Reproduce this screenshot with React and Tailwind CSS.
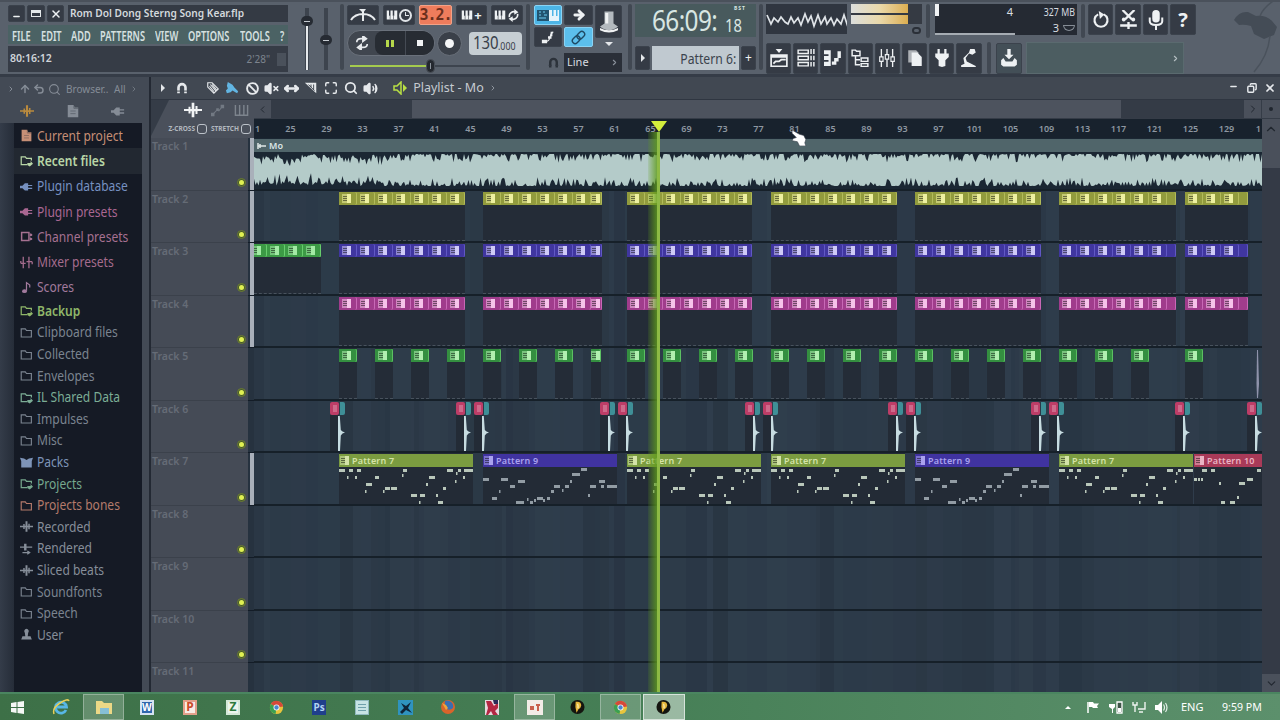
import {
  ArrowRight,
  ArrowUp,
  Ban,
  ChevronDown,
  ChevronLeft,
  ChevronRight,
  ChevronUp,
  Copy,
  Maximize,
  Minus,
  MoveHorizontal,
  Search,
  Undo2,
  Volume2,
  VolumeX,
  X,
} from "lucide-react";

const LANE_X = 254;
const LANE_W = 1008;

/* ---------- icons ---------- */

const glyphs = {
  doc: (
    <>
      <path d="M2 1h7l1 3h4v11H2z" fill="currentColor" />
      <path d="M9 1v4h5M5 8h6M5 11h6" fill="none" stroke="#2a303a" strokeWidth=".7" opacity=".6" />
    </>
  ),
  folder: <path d="M1.500 3.500h5l1.500 2h6v8h-12.500z" fill="none" stroke="currentColor" strokeWidth="1.400" />,
  folderLink: (
    <>
      <path d="M9 13H1.500V3.500h5l1.500 2h6v2.500" fill="none" stroke="currentColor" strokeWidth="1.500" />
      <path d="M9 11h4V8.500l3 3.500-4 3.500-3-2z" fill="currentColor" />
    </>
  ),
  plug: <path d="M0 7h3l3-3h4v2h5v1.500h-5v2h5V11h-5v2H6l-3-3H0z" fill="currentColor" />,
  channel: (
    <>
      <path d="M2 3h9v10H2z" fill="none" stroke="currentColor" strokeWidth="1.800" />
      <path d="M12 4l3 1v2l-3 1zM12 9l3 1v2l-3 1z" fill="currentColor" />
    </>
  ),
  mixer: (
    <path d="M4 1v14M11 1v14M1 9h6M8 7h7M1 6v3M15 7v3" fill="none" stroke="currentColor" strokeWidth="1.600" />
  ),
  note: (
    <>
      <path d="M8 12V2l4 3v3" fill="none" stroke="currentColor" strokeWidth="1.500" />
      <ellipse cx="5.500" cy="12.500" rx="3" ry="2.300" fill="currentColor" />
    </>
  ),
  packs: <path d="M0 2l5 1 3 2 3-2 5-1-1.500 4v8h-13V6z" fill="currentColor" />,
  wave: (
    <path d="M0 7.200h4V5h1.800v2h1V1.500h2.400V7h1V4.500H12v2.700h4v1.600h-4v2.700h-1.800V9h-1v5.500H6.800V9h-1v2H4V8.800H0z" fill="currentColor" />
  ),
  rendered: (
    <>
      <path d="M0 5.500h5V2h3v3.500h7V7H8v3.500H5V7H0z" fill="currentColor" />
      <path d="M3 13h9M9 11l3 2-3 2" fill="none" stroke="currentColor" strokeWidth="1.400" />
    </>
  ),
  user: <path d="M8 1a3 3 0 0 1 2 5l-.5 4h3.500l1.500 4h-13L3 10h3.500L6 6a3 3 0 0 1 2-5z" fill="currentColor" />,
  magnet: (
    <>
      <path d="M4 14V7.500a4 4 0 0 1 8 0V14" fill="none" stroke="currentColor" strokeWidth="3" />
      <path d="M2 11.500h4M10 11.500h4" stroke="#343a44" strokeWidth="1" />
    </>
  ),
  pencil: (
    <path d="M2 2h5l7 7-5 5-7-7zM5 4l6 7M7 4l5 6M4 6l5 6" fill="none" stroke="currentColor" strokeWidth="1.300" />
  ),
  brush: <path d="M3 1l5 3 2 3 4 4-1 2-2-1-3-2-2 2-4 1-1-3 2-2-1-3z" fill="currentColor" />,
  slice: (
    <>
      <path d="M1 2h13v12z" fill="currentColor" />
      <path d="M5 4l7 7M8 4v3M11 4v6" stroke="#343a44" strokeWidth="1" />
    </>
  ),
  piano: (
    <>
      <path d="M1 2h3v7h2V2h3v7h2V2h4v12H1z" fill="currentColor" />
      <path d="M5.500 9v5M10 9v5" stroke="#343a44" strokeWidth=".8" />
    </>
  ),
  keys: <path d="M1.500 2v11h13V2M6 2v11M10.500 2v11" fill="none" stroke="currentColor" strokeWidth="1.500" />,
  automation: (
    <>
      <path d="M2 13l5-5 2 1 4-5" fill="none" stroke="currentColor" strokeWidth="1.200" />
      <path d="M0 11h4v4H0zM6 6h3v3H6zM11 2h4v4h-4z" fill="currentColor" />
    </>
  ),
  playlist: (
    <>
      <path d="M5 0h6L8 3.500z" fill="currentColor" />
      <path d="M1 5.500h14v10H1z" fill="none" stroke="currentColor" strokeWidth="1.500" />
      <path d="M1 7h14M3 13l2-2h3l2-1.500h4" stroke="currentColor" strokeWidth="1.600" fill="none" />
    </>
  ),
  rack: (
    <path
      d="M1 1h9v3H1zM1 6.500h9v3H1zM1 12h9v3H1zM12.500 0v4.500M12.500 6v4M12.500 11.500v4M15 0v4.500M15 6v4M15 11.500v4"
      fill="none"
      stroke="currentColor"
      strokeWidth="1.300"
    />
  ),
  pianoRoll: (
    <>
      <path d="M0 1h6v14H0zM7 11h4v3H7zM9 8h4v3H9zM12 2h3v6h-3z" fill="currentColor" />
      <path d="M0 5.500h4M0 10.500h4" stroke="#343a44" strokeWidth="1.600" />
    </>
  ),
  tree: (
    <path
      d="M1 1h3l1 1h3v4H1zM4 6v8h4M4 9.500h4M9 8h6v3H9zM9 13h6v2.500H9z"
      fill="none"
      stroke="currentColor"
      strokeWidth="1.300"
    />
  ),
  faders: (
    <>
      <path d="M3 0v16M8 0v16M13 0v16" stroke="currentColor" strokeWidth="1.200" />
      <path d="M1.500 7h3v4h-3zM6.500 5h3v4h-3zM11.500 7h3v4h-3z" fill="#343a44" stroke="currentColor" />
    </>
  ),
  files: (
    <>
      <path d="M2 1h7l2 2v9H2z" fill="currentColor" opacity=".65" />
      <path d="M5 3h5l4 4v8H5z" fill="currentColor" />
    </>
  ),
  plugDown: <path d="M4 0h2v4h4V0h2v4h2v3l-3 3v5l-3 1-3-1v-5L2 7V4h2z" fill="currentColor" />,
  lamp: <path d="M9 0h4l1 3-3 2-3-1-3 4 1 3 8 4v1H1v-1.500L4 13l-1-5 5-5z" fill="currentColor" />,
  save: (
    <>
      <path d="M6.500 0h3v5H12L8 9 4 5h2.500z" fill="currentColor" />
      <path d="M1 10l2-2 2 3h6l2-3 2 2v4l-2 1.500H3L1 14z" fill="currentColor" />
    </>
  ),
  restart: (
    <>
      <path d="M10.500 3a5.800 5.800 0 1 1-5 0" fill="none" stroke="currentColor" strokeWidth="1.900" />
      <path d="M6 0l5 3-4 4z" fill="currentColor" />
    </>
  ),
  cut: (
    <>
      <path d="M3 0l8 8M13 0L5 8M1 13h14M8 10v6" stroke="currentColor" strokeWidth="2" />
      <circle cx="4" cy="8" r="1.600" fill="currentColor" />
      <circle cx="12" cy="8" r="1.600" fill="currentColor" />
    </>
  ),
  mic: (
    <>
      <rect x="5" y="0" width="6" height="10" rx="3" fill="currentColor" />
      <path d="M3 6v3q0 3 5 3t5-3V6M8 12v4" fill="none" stroke="currentColor" strokeWidth="1.600" />
    </>
  ),
  hat: (
    <>
      <path d="M5 1h6v8l3 2q-6 5-12 0l3-2z" fill="#b3b9be" />
      <path d="M2 12q6 3 12 0v1.500q-6 3-12 0zM5.500 2h2v7h-2z" fill="#f0f2f3" />
    </>
  ),
  loop: (
    <path
      d="M2 7q0-4 5-4h4M9 0l4 3-4 3zM14 9q0 4-5 4H5M7 10l-4 3 4 3z"
      fill="none"
      stroke="currentColor"
      strokeWidth="1.900"
    />
  ),
  cycle: (
    <>
      <path d="M3 10a5.500 5.500 0 0 1 8-6M13 6a5.500 5.500 0 0 1-8 6" fill="none" stroke="currentColor" strokeWidth="2" />
      <path d="M9 0l5 4-5 3zM7 16l-5-4 5-3z" fill="currentColor" />
    </>
  ),
  slide: (
    <>
      <path d="M3 13q6 1 7-4t4-7" fill="none" stroke="currentColor" strokeWidth="1.300" />
      <path d="M1 11h6v4H1zM8 7h4v3H8zM11 2h2v5h-2z" fill="currentColor" />
    </>
  ),
  link: (
    <g transform="rotate(-45 8 8)" fill="none" stroke="currentColor" strokeWidth="1.500">
      <rect x="0" y="5" width="9" height="6" rx="3" />
      <rect x="7" y="5" width="9" height="6" rx="3" />
    </g>
  ),
  hand: (
    <path
      d="M1 1l7 4 4 1 2 4-1 3 1 3H8l-2-4-5-1 1-2 3-1-4-4z"
      fill="#fff"
      stroke="#39414c"
      strokeWidth=".6"
    />
  ),
};

function Glyph({ name, size = 16, className = "" }) {
  return (
    <svg width={size} height={size} viewBox="0 0 16 16" className={`shrink-0 ${className}`}>
      {glyphs[name]}
    </svg>
  );
}

function Key({ className = "", tone = "border-[#3b424c] bg-[#353b45] text-[#eef1f3]", children }) {
  return (
    <div className={`flex shrink-0 items-center justify-center rounded-[2px] border ${tone} ${className}`}>
      {children}
    </div>
  );
}

function Divider() {
  return <div className="w-[4px] shrink-0 self-stretch rounded-sm bg-[#414852]" />;
}

/* ---------- top toolbar ---------- */

function TitleBlock() {
  const menu = [
    ["FILE", "w-[29px]"],
    ["EDIT", "w-[30px]"],
    ["ADD", "w-[29px]"],
    ["PATTERNS", "w-[55px]"],
    ["VIEW", "w-[33px]"],
    ["OPTIONS", "w-[52px]"],
    ["TOOLS", "w-[40px]"],
    ["?", "w-[8px]"],
  ];
  return (
    <div className="flex w-[288px] shrink-0 flex-col pt-[5px] pl-[8px]">
      <div className="flex h-[17px] gap-[2px]">
        <Key className="w-[17px]">
          <Minus size={9} strokeWidth={4} className="mt-1.5" />
        </Key>
        <Key className="w-[18px]">
          <div className="h-[7px] w-[10px] border border-t-[3px] border-[#e4e8ea]" />
        </Key>
        <Key className="w-[17px]">
          <X size={12} strokeWidth={3} />
        </Key>
        <div className="ml-[2px] flex flex-1 items-center bg-[#343a44] pl-[2px]">
          <span className="origin-left scale-x-[0.97] text-[10.500px] font-semibold whitespace-nowrap text-[#d3d8dc]">
            Rom Dol Dong Sterng Song Kear.flp
          </span>
        </div>
      </div>
      <div className="mt-[3px] flex h-[19px] items-center bg-[#4b6264] pl-[4px]">
        {menu.map(([label, w]) => (
          <div key={label} className={`${w} shrink-0`}>
            <span className="inline-block origin-left scale-x-[0.66] text-[14px] font-semibold whitespace-nowrap text-[#d6e0e0]">
              {label}
            </span>
          </div>
        ))}
      </div>
      <div className="mt-[2px] flex h-[26px] items-center justify-between bg-[#363c46] px-[2px]">
        <span className="text-[10.500px] font-semibold text-[#d0d5da]">80:16:12</span>
        <div className="flex items-center gap-[7px] text-[#7d848e]">
          <span className="text-[10px]">2'28"</span>
          <div className="h-[13px] w-[9px] bg-[#4a515b]" />
        </div>
      </div>
    </div>
  );
}

function Fader({ knob, lit }) {
  return (
    <div className="relative h-[62px] w-[4px] bg-[#3d444e]">
      {lit && <div className="absolute inset-x-[1px] top-[14px] bottom-0 bg-[#e6e9ec]" />}
      <div
        className="absolute -left-[4px] flex h-[10px] w-[12px] items-center justify-center rounded-full bg-[#262b33]"
        style={{ top: knob }}
      >
        <div className="h-px w-[6px] bg-[#c5cad0]" />
      </div>
    </div>
  );
}

function Transport() {
  return (
    <div className="flex w-[184px] shrink-0 flex-col pt-[5px] pl-[3px]">
      <div className="flex h-[20px] gap-[4px]">
        <Key className="w-[32px]">
          <svg width="26" height="14" viewBox="0 0 26 14" fill="none" stroke="#e8ebee" strokeWidth="2">
            <path d="M1 12Q5 6 13 6t12 6M13 13V3" />
            <path d="M9 1h7l-3 4z" fill="#e8ebee" stroke="none" />
          </svg>
        </Key>
        <Key className="w-[32px] gap-[1px]">
          <Glyph name="piano" size={12} />
          <div className="relative h-[13px] w-[13px] rounded-full border-2 border-[#dfe3e7]">
            <div className="absolute top-[1px] left-[4px] h-[4px] w-[4px] border-b border-l border-[#dfe3e7]" />
          </div>
        </Key>
        <Key className="w-[33px]" tone="border-[#f2a287] bg-[#ee7c5c]">
          <span className="font-['DejaVu_Sans_Mono',monospace] text-[15px] leading-none font-bold tracking-[-1px] text-[#6b2f1d]">
            3.2.
          </span>
        </Key>
        <Key className="w-[31px] gap-[1px]">
          <Glyph name="piano" size={12} />
          <span className="text-[13px] leading-none font-bold">+</span>
        </Key>
        <Key className="w-[32px] gap-[1px]">
          <Glyph name="piano" size={12} />
          <Glyph name="cycle" size={13} />
        </Key>
      </div>
      <div className="mt-[5px] flex h-[26px] items-center">
        <div className="flex h-[26px] w-[88px] items-center rounded-full border border-[#6a717b] bg-[#40464f]">
          <div className="flex w-[27px] justify-center text-[#e8ebee]">
            <Glyph name="loop" size={14} />
          </div>
          <div className="flex h-[24px] w-[30px] items-center justify-center gap-[2px] rounded-l-lg bg-[#272c33]">
            <div className="h-[7px] w-[3px] bg-[#b6d84b]" />
            <div className="h-[7px] w-[3px] bg-[#b6d84b]" />
          </div>
          <div className="flex h-[24px] flex-1 items-center justify-center rounded-r-full border-l border-[#454b54] bg-[#272c33]">
            <div className="h-[6px] w-[6px] bg-[#f1f3f5]" />
          </div>
        </div>
        <div className="ml-[2px] flex h-[25px] w-[25px] items-center justify-center rounded-full border border-[#69707a] bg-[#3a4049]">
          <div className="h-[9px] w-[9px] rounded-full bg-[#f5f6f7]" />
        </div>
        <div className="ml-[7px] flex h-[23px] w-[53px] items-center rounded-[4px] bg-[#c6ced3] pl-[4px] text-[#39414b]">
          <span className="w-[25px]">
            <span className="inline-block origin-left scale-x-[0.83] text-[18px] leading-none">130</span>
          </span>
          <span className="origin-left scale-x-[0.8] pt-[4px] text-[11px] leading-none">.000</span>
        </div>
      </div>
      <div className="mt-[6px] ml-[3px] flex h-[8px] w-[170px] items-center">
        <div className="h-[2px] w-[76px] bg-[#a5cb4e]" />
        <div className="h-[14px] w-[9px] rounded-full border border-[#4a5059] bg-[#24282f] px-[2px] py-[3px]">
          <div className="mx-auto h-full w-px bg-[#8b929b]" />
        </div>
        <div className="h-[2px] flex-1 bg-[#3d444e]" />
      </div>
    </div>
  );
}

function ToolsBlock() {
  return (
    <div className="flex w-[96px] shrink-0 flex-col pt-[5px] pl-[4px]">
      <div className="flex gap-[2px]">
        <div className="grid grid-cols-[28px_29px] grid-rows-[20px_20px] gap-x-[2px] gap-y-[2px]">
          <Key tone="border-[#8ad4f5] bg-[#4cb5e6]">
            <svg width="24" height="13" viewBox="0 0 24 13">
              <path d="M1 1h12v11H1z" fill="#225470" />
              <path d="M3 3h2M7 3h2M3 6h2M8 6h3M3 9h7" stroke="#6fd0f5" />
              <path d="M13 1h3v6h1.500V1H20v6h1.500V1H23v11H13z" fill="#e4f4fb" />
            </svg>
          </Key>
          <Key>
            <ArrowRight size={14} strokeWidth={5} />
          </Key>
          <Key>
            <Glyph name="slide" size={14} />
          </Key>
          <Key tone="border-[#8ad4f5] bg-[#5cbfec] text-[#1f4a64]">
            <Glyph name="link" size={15} />
          </Key>
        </div>
        <div className="flex flex-col items-center">
          <Key className="h-[33px] w-[27px]">
            <Glyph name="hat" size={24} />
          </Key>
          <div className="mt-[4px] h-0 w-0 border-x-[4px] border-t-[4px] border-x-transparent border-t-[#e4e7ea]" />
        </div>
      </div>
      <div className="mt-[6px] flex h-[19px] items-center">
        <div className="flex w-[29px] justify-end pr-[3px]">
          <Glyph name="magnet" size={13} className="text-[#2c323a]" />
        </div>
        <div className="ml-[1px] flex h-[19px] w-[58px] items-center justify-between bg-[#2a2f38] px-[3px]">
          <span className="text-[11px] text-[#d9dde1]">Line</span>
          <ChevronRight size={9} strokeWidth={3} className="text-[#8a919b]" />
        </div>
      </div>
    </div>
  );
}

function TimeBlock() {
  return (
    <div className="flex w-[127px] shrink-0 flex-col pt-[4px] pl-[3px]">
      <div className="flex h-[33px] w-[121px] items-center bg-[#485a5d] pl-[17px] text-[#d8e6e2]">
        <span className="w-[73px]">
          <span className="inline-block origin-left scale-x-[0.84] text-[29px] leading-none tracking-tight whitespace-nowrap">
            66:09:
          </span>
        </span>
        <div className="flex flex-col items-start">
          <span className="pl-[9px] text-[5px] leading-[5px] font-bold tracking-[1px]">BST</span>
          <span className="mt-[4px] origin-left scale-x-[0.82] text-[18px] leading-[20px]">18</span>
        </div>
      </div>
      <div className="mt-[9px] flex h-[24px] gap-[2px]">
        <Key className="w-[15px]">
          <div className="h-0 w-0 border-y-[4px] border-l-[4px] border-y-transparent border-l-[#e4e7ea]" />
        </Key>
        <div className="flex w-[87px] items-center justify-end bg-[#c0c9d0] pr-[3px]">
          <span className="origin-right scale-x-[0.87] text-[14px] whitespace-nowrap text-[#3b434d]">Pattern 6:</span>
        </div>
        <Key className="w-[15px] text-[12px]">+</Key>
      </div>
    </div>
  );
}

function Scope() {
  return (
    <svg width="81" height="30" viewBox="0 0 81 30" className="shrink-0 bg-[#303640]">
      <path
        d="M1 11l4 9 3-6 4 4 3-5 4 5 3 2 3-7 3 6 4-5 3 7 4-11 3 8 3-6 3 10 4-11 3 9 4-7 2 7 4-6 3 7 3-6 4 5 3-9 4 12"
        fill="none"
        stroke="#dfe3e7"
        strokeWidth="1.700"
      />
    </svg>
  );
}

function RightBlock() {
  const windows = ["playlist", "rack", "pianoRoll", "tree", "faders", "files", "plugDown", "lamp"];
  return (
    <div className="flex shrink-0 flex-col pt-[4px] pl-[3px]">
      <div className="flex h-[34px]">
        <Scope />
        <div className="ml-[4px] w-[71px]">
          <div className="flex h-[20px] bg-[#353a43]">
            <div className="flex w-[57px] flex-col gap-[2px]">
              <div className="flex-1 bg-linear-to-r from-[#dcdedc] via-[#ead9aa] to-[#dcae4f]" />
              <div className="flex-1 bg-linear-to-r from-[#dcdedc] via-[#ead9aa] to-[#dcae4f]" />
            </div>
          </div>
          <div className="mt-[3px] ml-[61px] h-[7px] w-[9px] rounded-full border-2 border-[#2b3038]" />
        </div>
        <div className="ml-[4px] flex">
          <Divider />
        </div>
        <div className="ml-[5px] flex h-[31px] w-[142px] bg-[#252a33] text-[11px] leading-none text-[#d9dde1]">
          <div className="flex w-[80px] flex-col justify-between border-b-2 border-[#a6acb3]">
            <div className="flex justify-between pr-[2px]">
              <div className="h-[12px] w-[4px] bg-[#f0f2f4]" />
              <span className="pt-[2px]">4</span>
            </div>
          </div>
          <div className="flex flex-1 flex-col items-end justify-between pt-[2px] pr-[2px] pb-[2px]">
            <span className="origin-right scale-x-[0.8] whitespace-nowrap">327 MB</span>
            <div className="flex items-center gap-[4px]">
              <span>3</span>
              <div className="h-[6px] w-[12px] rounded-b-full border border-[#858c95]" />
            </div>
          </div>
        </div>
        <div className="ml-[4px] flex">
          <Divider />
        </div>
        <div className="ml-[3px] flex h-[31px] gap-[2px]">
          <Key className="w-[25px]">
            <Glyph name="restart" size={18} />
          </Key>
          <Key className="w-[26px]">
            <Glyph name="cut" size={19} />
          </Key>
          <Key className="w-[25px]">
            <Glyph name="mic" size={20} />
          </Key>
          <Key className="w-[26px] text-[20px] font-bold">?</Key>
        </div>
      </div>
      <div className="mt-[4px] flex h-[32px] items-center">
        <div className="flex gap-[2px]">
          {windows.map((name) => (
            <Key key={name} className="h-[31px] w-[25.200px]">
              <Glyph name={name} size={18} />
            </Key>
          ))}
        </div>
        <div className="ml-[5px] flex h-[32px]">
          <Divider />
        </div>
        <Key className="ml-[5px] h-[31px] w-[26px]" tone="border-[#3b424c] bg-[#434f57] text-[#eef1f3]">
          <Glyph name="save" size={18} />
        </Key>
        <div className="ml-[4px] flex h-[32px] w-[158px] items-center justify-end border border-[#5a6a6f] bg-[#4c5d61] pr-[3px]">
          <ChevronRight size={9} strokeWidth={3} className="text-[#b5bfc2]" />
        </div>
      </div>
    </div>
  );
}

function TopBar() {
  return (
    <div className="relative flex h-[77px] overflow-hidden border-t-2 border-b-[3px] border-t-[#4a515b] border-b-[#353c47] bg-[#59616c]">
      <div className="-mt-[2px] flex">
        <TitleBlock />
        <div className="flex w-[52px] shrink-0 gap-[15px] pt-[8px] pl-[17px]">
          <Fader knob={8} lit />
          <Fader knob={27} />
        </div>
        <div className="flex shrink-0 pt-[4px] pb-[4px]">
          <Divider />
        </div>
        <Transport />
        <div className="-ml-[2px] flex shrink-0 pt-[4px] pb-[4px]">
          <Divider />
        </div>
        <ToolsBlock />
        <div className="ml-[2px] flex shrink-0 pt-[4px] pb-[4px]">
          <Divider />
        </div>
        <TimeBlock />
        <div className="flex shrink-0 pt-[4px] pb-[4px]">
          <Divider />
        </div>
        <RightBlock />
      </div>
      {/* fruit leaf watermark */}
      <svg className="absolute -top-[2px] right-0" width="60" height="74" viewBox="0 0 60 74">
        <path d="M14 20q5-9 14-8l8 4q10-1 16 5l5 6-3 8-10 4-10-5-3-8q-7-2-12-1z" fill="#444c56" />
        <path d="M40 16q4-10 18-18M50 36q-2 20-16 36" fill="none" stroke="#4a525c" strokeWidth="1.500" />
      </svg>
    </div>
  );
}

/* ---------- browser ---------- */

const mainEntries = [
  ["Current project", "doc", "text-[#c78f76]"],
  ["Recent files", "folderLink", "text-[#b8d6a6] font-semibold"],
  ["Plugin database", "plug", "text-[#7690c0]"],
  ["Plugin presets", "plug", "text-[#a96792]"],
  ["Channel presets", "channel", "text-[#a57191]"],
  ["Mixer presets", "mixer", "text-[#a56c8d]"],
  ["Scores", "note", "text-[#a27a9d]"],
];

const folderEntries = [
  ["Backup", "folderLink", "text-[#8fb669] font-semibold"],
  ["Clipboard files", "folder", "text-[#7b8490]"],
  ["Collected", "folder", "text-[#7b8490]"],
  ["Envelopes", "folder", "text-[#7b8490]"],
  ["IL Shared Data", "folderLink", "text-[#7cad96]"],
  ["Impulses", "folder", "text-[#7b8490]"],
  ["Misc", "folder", "text-[#7b8490]"],
  ["Packs", "packs", "text-[#7e94b8]"],
  ["Projects", "folderLink", "text-[#76a88d]"],
  ["Projects bones", "folder", "text-[#b47a6b]"],
  ["Recorded", "wave", "text-[#868e99]"],
  ["Rendered", "rendered", "text-[#868e99]"],
  ["Sliced beats", "wave", "text-[#868e99]"],
  ["Soundfonts", "folder", "text-[#7b8490]"],
  ["Speech", "folder", "text-[#7b8490]"],
  ["User", "user", "text-[#868e99]"],
];

function Entry({ entry, className }) {
  const [label, icon, color] = entry;
  return (
    <div className={`flex shrink-0 items-center pl-[6px] ${color} ${className}`}>
      <Glyph name={icon} size={13} />
      <span className="ml-[4px] origin-left scale-x-[0.86] text-[14px] leading-none whitespace-nowrap">{label}</span>
    </div>
  );
}

function Browser() {
  return (
    <div className="flex w-[151px] shrink-0 border-r-2 border-[#232933] bg-[#434a55]">
      <div className="flex w-[142px] flex-col">
        <div className="flex h-[24px] items-center pl-[7px] text-[#858c96]">
          <ChevronRight size={8} strokeWidth={3} />
          <ArrowUp size={12} strokeWidth={3} className="ml-[4px]" />
          <Undo2 size={12} strokeWidth={3} className="ml-[2px]" />
          <Search size={13} className="ml-[3px]" />
          <span className="ml-[5px] w-[48px] text-[10px]">Browser..</span>
          <span className="w-[16px] text-[10px]">All</span>
          <ChevronRight size={8} />
        </div>
        <div className="flex h-[22px] items-center justify-between pr-[17px] pb-[2px] pl-[20px]">
          <Glyph name="wave" size={14} className="text-[#b98a3e]" />
          <Glyph name="doc" size={14} className="text-[#858c96]" />
          <Glyph name="plug" size={14} className="text-[#858c96]" />
        </div>
        <div className="flex flex-1 overflow-hidden">
          <div className="w-[14px] shrink-0 bg-linear-to-r from-[#343c49] to-[#262d39]" />
          <div className="flex flex-1 flex-col bg-[#151a25]">
            {mainEntries.map((entry, i) => (
              <Entry key={entry[0]} entry={entry} className={i === 1 ? "h-[25.300px] bg-[#222831]" : "h-[25.300px]"} />
            ))}
            {folderEntries.map((entry) => (
              <Entry key={entry[0]} entry={entry} className="h-[21.600px]" />
            ))}
          </div>
        </div>
      </div>
    </div>
  );
}

/* ---------- playlist data ---------- */

// start x and end x of every run of short clips
const runs = [
  [339, 465],
  [483, 602],
  [627, 752],
  [771, 897],
  [915, 1041],
  [1059, 1176],
  [1185, 1248],
];

const greenHits = [
  339, 375, 411, 447, 483, 519, 555, 591, 627, 663, 699, 735, 771, 807, 843, 879, 915, 951, 987, 1023, 1059, 1095,
  1131, 1185,
];

const fills = [330, 456, 474, 600, 618, 745, 763, 888, 906, 1031, 1049, 1175, 1247];

// [x, y, width]
const notes7 = [
  [0, 3, 6], [10, 3, 4], [18, 3, 4], [8, 10, 1.5], [16, 10, 2], [27, 17, 6], [26, 24, 1.5], [36, 10, 4],
  [44, 24, 1.5], [46, 21, 5], [52, 21, 6], [64, 3, 4], [63, 8, 1.5], [72, 28, 6], [81, 28, 5], [80, 35, 1.5],
  [87, 17, 2], [90, 10, 6], [97, 28, 2], [99, 35, 5], [104, 21, 3], [108, 3, 6], [119, 3, 3], [125, 3, 9],
  [117, 6, 1.5], [116, 14, 1.5], [124, 10, 2],
];
const notes9 = [
  [0, 12, 6], [18, 12, 7], [27, 19, 5], [35, 14, 7], [16, 24, 1.5], [9, 31, 5], [33, 35, 8], [44, 32, 1.5],
  [47, 35, 3], [51, 33, 2], [54, 31, 6], [60, 33, 2], [64, 31, 3], [68, 24, 3], [71, 19, 6], [79, 23, 1.5],
  [82, 19, 4], [87, 14, 2], [89, 7, 8], [98, 2, 6], [107, 19, 6], [105, 28, 2], [116, 14, 6], [118, 19, 3],
  [124, 19, 10],
];
const notes10 = [
  [8, 3, 5], [17, 3, 4], [0, 12, 3], [4, 12, 2], [7, 12, 2], [25, 16, 2], [27, 35, 4], [36, 35, 5], [43, 30, 2],
  [45, 16, 6], [53, 12, 6], [63, 3, 4],
];

const patterns = [
  [339, 134, "Pattern 7", "bg-[#7b9c40]", "text-[#d4e3a8]", notes7],
  [483, 134, "Pattern 9", "bg-[#4033a0]", "text-[#aaa2ee]", notes9],
  [627, 134, "Pattern 7", "bg-[#7b9c40]", "text-[#d4e3a8]", notes7],
  [771, 134, "Pattern 7", "bg-[#7b9c40]", "text-[#d4e3a8]", notes7],
  [915, 134, "Pattern 9", "bg-[#4033a0]", "text-[#aaa2ee]", notes9],
  [1059, 134, "Pattern 7", "bg-[#7b9c40]", "text-[#d4e3a8]", notes7],
  [1194, 68, "Pattern 10", "bg-[#a93a58]", "text-[#eab3c3]", notes10],
];

function noise(i) {
  const v = Math.sin(i * 12.9898) * 43758.5453;
  return v - Math.floor(v);
}

function wavePoints() {
  const top = [];
  const bottom = [];
  for (let x = 0; x <= LANE_W; x += 1.5) {
    const quiet = x < 130 ? 5 : 0;
    const a = noise(x) ** 3 * 9 + quiet * noise(x + 3);
    const b = noise(x + 7000) ** 3 * 9 + quiet * noise(x + 5);
    top.push(`${x},${2 + a}`);
    bottom.unshift(`${x},${35 - b}`);
  }
  return top.concat(bottom).join(" ");
}

const WAVE = wavePoints();

const stripes = [];
for (let x = 0, i = 0; x < LANE_W; i++) {
  const w = 3 + Math.round(noise(i + 50) * 22);
  stripes.push([x, w, noise(i + 400)]);
  x += w;
}

/* ---------- playlist lanes ---------- */

function LaneBackdrop() {
  return (
    <svg className="absolute inset-0" width={LANE_W} height="554">
      <rect width={LANE_W} height="554" fill="#293644" />
      {stripes.map(([x, w, o]) => (
        <rect key={x} x={x} width={w} height="554" fill="#364655" opacity={o * 0.5} />
      ))}
    </svg>
  );
}

function Chip({ className = "" }) {
  return (
    <svg width="9" height="9" viewBox="0 0 9 9" className={`shrink-0 ${className}`}>
      <path d="M0 0h9v9H0z" fill="currentColor" opacity=".55" />
      <path d="M5 0h4v9H5z" fill="currentColor" />
      <path d="M1 2.500h4M1 4.500h4M1 6.500h4" stroke="#0007" strokeWidth="1" />
    </svg>
  );
}

function ClipRun({ from, to, head, chip, edge }) {
  const cells = [];
  for (let x = from; x < to; x += 18) cells.push(Math.min(18, to - x));
  return (
    <div className="absolute inset-y-0 flex flex-col bg-[#242c37]" style={{ left: from - LANE_X, width: to - from }}>
      <div className={`mt-px flex h-[13px] ${head}`}>
        {cells.map((w, i) => (
          <div
            key={i}
            className={`flex shrink-0 items-center overflow-hidden rounded-[2px] border-r ${edge} ${w > 11 ? "pl-[3px]" : ""}`}
            style={{ width: w }}
          >
            {w > 9 && <Chip className={chip} />}
          </div>
        ))}
      </div>
      <div className="flex-1" />
      <div className="h-px w-full border-t border-dashed border-[#48525d]" />
    </div>
  );
}

function AudioLane() {
  return (
    <div className="absolute inset-0 flex flex-col bg-[#1b2733]">
      <div className="mt-px flex h-[13px] shrink-0 items-center gap-[3px] bg-[#50656a] pl-[3px]">
        <svg width="9" height="8" viewBox="0 0 9 8">
          <path d="M1 1v6M1 4h8M3 2v4" stroke="#dfe8e8" strokeWidth="1.500" />
        </svg>
        <span className="text-[9px] leading-none font-semibold tracking-wide text-[#dce6e6]">Mo</span>
      </div>
      <svg width={LANE_W} height="36" viewBox={`0 0 ${LANE_W} 37`} preserveAspectRatio="none" className="shrink-0">
        <polygon points={WAVE} fill="#b4cbc9" />
      </svg>
    </div>
  );
}

function RunLane({ head, chip, edge }) {
  return runs.map(([from, to]) => <ClipRun key={from} from={from} to={to} head={head} chip={chip} edge={edge} />);
}

function FillLane() {
  return fills.map((x) => (
    <div key={x} className="absolute inset-y-0" style={{ left: x - LANE_X, width: 16 }}>
      <div className="mt-px flex h-[13px] gap-px">
        <div className="flex w-[9px] items-center justify-center rounded-[2px] bg-[#bd3d67]">
          <div className="h-[7px] w-[4px] bg-[#cd6a8b]" />
        </div>
        <div className="w-[5px] rounded-r-[2px] bg-[#3f8f97]" />
      </div>
      <svg width="16" height="37" viewBox="0 0 16 37">
        <path d="M0 0h9v36H0z" fill="#232b36" />
        <path d="M8 1h1.800l1 14 1.700 1.500 2.500 1-2.500 1-1.700 2L10 36H8z" fill="#c7dce1" />
      </svg>
    </div>
  ));
}

function PatternLane() {
  return patterns.map(([x, w, label, head, tone, notes]) => (
    <div
      key={x}
      className="absolute inset-y-0 flex flex-col overflow-hidden bg-[#232b36]"
      style={{ left: x - LANE_X, width: w }}
    >
      <div className={`mt-px flex h-[13px] shrink-0 items-center gap-[3px] pl-[1px] ${head} ${tone}`}>
        <Chip />
        <span className="text-[9px] leading-none font-semibold tracking-[0.2px] whitespace-nowrap">{label}</span>
      </div>
      <svg width={w} height="38" className="shrink-0">
        {notes.map(([nx, ny, nw], i) => (
          <rect key={i} x={nx} y={ny - 1} width={nw} height="3" fill={label === "Pattern 9" ? "#929ca4" : "#b9c7ba"} />
        ))}
      </svg>
    </div>
  ));
}

function laneContent(n) {
  switch (n) {
    case 1:
      return <AudioLane />;
    case 2:
      return <RunLane head="bg-[#929b3d]" chip="text-[#eef0a0]" edge="border-[#b3bb5a]" />;
    case 3:
      return (
        <>
          <ClipRun from={249} to={321} head="bg-[#3c9a45]" chip="text-[#a3eaa5]" edge="border-[#68cd6e]" />
          <RunLane head="bg-[#4036a0]" chip="text-[#cfcaf6]" edge="border-[#6158c4]" />
        </>
      );
    case 4:
      return <RunLane head="bg-[#a03c8c]" chip="text-[#f6c3ea]" edge="border-[#c868b6]" />;
    case 5:
      return (
        <>
          {greenHits.map((x) => (
            <ClipRun
              key={x}
              from={x}
              to={x + (x === 591 ? 10 : 18)}
              head="bg-[#348f40]"
              chip="text-[#b2efb0]"
              edge="border-[#5cc063]"
            />
          ))}
          <svg className="absolute top-0 right-0" width="8" height="52" viewBox="0 0 8 52">
            <path d="M3 2h1l1 34-1 14H3L2.500 36z" fill="#8f93ab" />
          </svg>
        </>
      );
    case 6:
      return <FillLane />;
    case 7:
      return <PatternLane />;
    default:
      return null;
  }
}

function Track({ n }) {
  const marked = [1, 2, 3, 4, 7].includes(n);
  return (
    <div className="flex h-[52.500px] shrink-0">
      <div className="flex w-[97px] shrink-0 flex-col justify-between border-b border-[#3b414b] bg-[#454b56] pt-[2px] pb-[3px] pl-[1px]">
        <span className="text-[10.500px] leading-[12px] font-semibold text-[#656c76]">Track {n}</span>
        <div className="mr-[2px] flex h-[9px] w-[9px] items-center justify-center self-end rounded-full border border-[#6a7c34] bg-[#495a2b]">
          <div className="h-[5px] w-[5px] rounded-full bg-[#dff053]" />
        </div>
      </div>
      <div className="flex w-[6px] shrink-0 border-b border-[#131c27] bg-[#26323f] pl-[2px]">
        {marked && <div className="w-[4px] bg-[#a9b0ba]" />}
      </div>
      <div className="relative flex-1 overflow-hidden border-b-2 border-[#162029]">{laneContent(n)}</div>
    </div>
  );
}

function Playhead() {
  return (
    <div className="absolute top-[13px] flex h-[560px] w-[12px]" style={{ left: 648 - LANE_X }}>
      <div className="flex-1 bg-linear-to-r from-[#5f9c1b22] to-[#5f9c1bcc]" />
      <div className="w-[3px] bg-[#8dba45]" />
    </div>
  );
}

function PlaylistToolbar() {
  return (
    <div className="flex h-[23px] items-center border-b border-[#2f3641] bg-[#414852] pl-[10px] text-[#e6e9ec]">
      <div className="h-0 w-0 border-y-[4px] border-l-[4px] border-y-transparent border-l-[#e4e7ea]" />
      <div className="ml-[7px] flex w-[20px] justify-center">
        <Glyph name="magnet" size={14} />
      </div>
      <div className="ml-[11px] grid grid-cols-[repeat(9,19.700px)] place-items-center">
        <Glyph name="pencil" size={14} />
        <Glyph name="brush" size={15} className="text-[#62b5e2]" />
        <Ban size={13} strokeWidth={3.500} />
        <VolumeX size={15} strokeWidth={2.500} fill="currentColor" />
        <MoveHorizontal size={15} strokeWidth={4} />
        <Glyph name="slice" size={14} />
        <Maximize size={14} strokeWidth={2.500} />
        <Search size={14} strokeWidth={3} />
        <Volume2 size={15} strokeWidth={2.500} fill="currentColor" />
      </div>
      <svg width="15" height="14" viewBox="0 0 15 14" className="ml-[13px]">
        <path d="M1 5h3l4-4v12L4 9H1z" fill="none" stroke="#b9e044" strokeWidth="1.500" />
        <path d="M10 3l4 4-4 4z" fill="#b9e044" />
      </svg>
      <span className="ml-[5px] w-[76px] text-[12.500px] whitespace-nowrap text-[#c6cbd1]">Playlist - Mo</span>
      <ChevronRight size={8} strokeWidth={3} className="text-[#8d949d]" />
      <div className="ml-auto flex items-center gap-[7px] pr-[4px]">
        <Minus size={9} strokeWidth={4} className="mr-[2px] mb-[3px]" />
        <Copy size={10} strokeWidth={3.500} className="-scale-x-100" />
        <X size={12} strokeWidth={3.500} />
      </div>
    </div>
  );
}

function Corner() {
  return (
    <div className="flex w-[103px] shrink-0 flex-col bg-[#353c47]">
      <div className="flex h-[38px] flex-col bg-[#4a505b] [clip-path:polygon(18px_0,100%_0,100%_100%,0_100%,0_36px)]">
        <div className="flex h-[20px] items-center gap-[9px] pl-[33px]">
          <Glyph name="wave" size={18} className="text-[#f2f4f5]" />
          <Glyph name="automation" size={14} className="text-[#727983]" />
          <Glyph name="keys" size={15} className="text-[#7d848d]" />
        </div>
        <div className="flex h-[18px] items-center justify-end gap-[2px] pr-[3px] text-[6.500px] font-bold text-[#b2b8bf]">
          <span>Z-CROSS</span>
          <div className="h-[10px] w-[10px] rounded-[3px] border border-[#bcc2c9]" />
          <span className="ml-[2px]">STRETCH</span>
          <div className="h-[10px] w-[10px] rounded-[3px] border border-[#bcc2c9]" />
        </div>
      </div>
    </div>
  );
}

function ScrollBtn({ className = "", children }) {
  return (
    <div className={`flex shrink-0 items-center justify-center bg-[#4a505b] text-[#20262f] ${className}`}>{children}</div>
  );
}

function Playlist() {
  const bars = Array.from({ length: 27 }, (_, i) => 25 + i * 4);
  const tracks = Array.from({ length: 11 }, (_, i) => i + 1);
  return (
    <div className="flex min-w-0 flex-1 flex-col bg-[#353c47]">
      <PlaylistToolbar />
      <div className="flex h-[38px] shrink-0">
        <Corner />
        <div className="flex min-w-0 flex-1 flex-col">
          <div className="flex h-[19px] pb-px">
            <ScrollBtn className="w-[17px]">
              <ChevronLeft size={11} />
            </ScrollBtn>
            <div className="flex flex-1 bg-[#343b46] pl-[141px]">
              <div className="w-[709px] bg-[#4d535e]" />
            </div>
            <ScrollBtn className="w-[17px]">
              <ChevronRight size={12} />
            </ScrollBtn>
            <ScrollBtn className="ml-px w-[18px]">
              <div className="h-[4px] w-[4px] rounded-full bg-[#20262f]" />
            </ScrollBtn>
          </div>
          <div className="flex h-[19px]">
            <div className="flex w-[1008px] shrink-0 items-center bg-[#18222d] text-[9px] font-semibold text-[#8e97a1]">
              <div className="w-[18.500px] shrink-0 pl-px">1</div>
              {bars.map((bar) => (
                <div key={bar} className="w-[36px] shrink-0 text-center">
                  {bar}
                </div>
              ))}
              <div className="ml-auto pr-px">1</div>
            </div>
            <ScrollBtn className="flex-1">
              <ChevronUp size={14} />
            </ScrollBtn>
          </div>
        </div>
      </div>
      <div className="relative flex min-h-0 flex-1">
        <div className="relative flex w-[1111px] flex-col overflow-hidden">
          <div className="absolute inset-y-0 right-0 left-[103px]">
            <LaneBackdrop />
          </div>
          {tracks.map((n) => (
            <Track key={n} n={n} />
          ))}
        </div>
        <div className="flex flex-1 flex-col justify-between bg-[#343a46]">
          <ScrollBtn className="h-[30px]" />
          <ScrollBtn className="h-[18px]">
            <ChevronDown size={13} />
          </ScrollBtn>
        </div>
        {/* play position marker and its line, over ruler and lanes */}
        <div className="pointer-events-none absolute -top-[19px] left-[103px] h-[573px] w-[1008px] overflow-hidden">
          <Playhead />
          <div
            className="absolute top-[2px] h-0 w-0 border-x-[8px] border-t-[11px] border-x-transparent border-t-[#d3ee3c]"
            style={{ left: 651 - LANE_X }}
          />
          <div className="absolute top-[10px]" style={{ left: 791 - LANE_X }}>
            <Glyph name="hand" size={17} />
          </div>
        </div>
      </div>
    </div>
  );
}

/* ---------- taskbar ---------- */

function Tile({ className, children }) {
  return (
    <div className={`flex h-[15px] w-[14px] items-center justify-center text-[10px] leading-none font-bold ${className}`}>
      {children}
    </div>
  );
}

function ChromeIcon() {
  return (
    <svg width="15" height="15" viewBox="0 0 16 16">
      <circle cx="8" cy="8" r="7" fill="#e8c53c" />
      <path d="M8 8L2 4.300A7 7 0 0 1 15 7z" fill="#d6493a" />
      <path d="M8 8l-1 7A7 7 0 0 1 2 4.300z" fill="#3ba052" />
      <circle cx="8" cy="8" r="3.200" fill="#f0f3f5" />
      <circle cx="8" cy="8" r="2.300" fill="#4a86cf" />
    </svg>
  );
}

function FruityIcon() {
  return (
    <svg width="15" height="16" viewBox="0 0 16 16">
      <circle cx="8" cy="8" r="7.500" fill="#14150f" />
      <path d="M6 2.500q6-1 6 4-.5 3-3 4l-2 3.500q-2-6-1-11.500z" fill="#e5b63b" />
      <path d="M8 4.500q1 2 .5 5" fill="none" stroke="#f8e9a6" strokeWidth="1.500" />
    </svg>
  );
}

const apps = [
  <svg key="win" width="13" height="13" viewBox="0 0 13 13">
    <path d="M0 2l5.500-1v5H0zM6.500 1L13 0v6H6.500zM0 7h5.500v5L0 11zM6.500 7H13v6l-6.500-1z" fill="#f4f8f5" />
  </svg>,
  <svg key="ie" width="18" height="17" viewBox="0 0 18 17">
    <path d="M14 11a5.500 5.500 0 1 1 .5-3H5" fill="none" stroke="#58b7e6" strokeWidth="2.800" />
    <path d="M2 15Q0 9 8 4t9-2" fill="none" stroke="#e7cf58" strokeWidth="1.500" />
  </svg>,
  <svg key="explorer" width="18" height="15" viewBox="0 0 18 15">
    <path d="M1 1h6l2 2h8v11H1z" fill="#ecd886" />
    <path d="M5 8h9v6H5z" fill="#86bfd6" />
  </svg>,
  <Tile key="word" className="border-2 border-[#d5e2f1] bg-[#2f66ac] text-white">W</Tile>,
  <Tile key="ppt" className="border-2 border-[#e3a08b] bg-[#f8ece7] text-[12px] text-[#cb4a2b]">P</Tile>,
  <Tile key="excel" className="border-2 border-[#d5e8d8] bg-[#edf5ee] text-[12px] text-[#2d7a3d]">Z</Tile>,
  <ChromeIcon key="chrome" />,
  <Tile key="ps" className="bg-[#1f3f8c] text-[9px] text-[#b2d3f2]">Ps</Tile>,
  <Tile key="notes" className="flex-col gap-[2px] border border-[#8fb9bd] bg-[#c7e3e4]">
    <div className="h-px w-[8px] bg-[#6fa0ab]" />
    <div className="h-px w-[8px] bg-[#6fa0ab]" />
    <div className="h-px w-[8px] bg-[#6fa0ab]" />
  </Tile>,
  <svg key="k" width="15" height="15" viewBox="0 0 15 15">
    <path d="M0 0h15v15H0z" fill="#2f93bf" />
    <path d="M2 12l4-4-3-5 5 3 5-4-3 6 4 5-6-3-4 4z" fill="#0f2438" />
  </svg>,
  <svg key="firefox" width="16" height="16" viewBox="0 0 16 16">
    <circle cx="8" cy="8" r="7" fill="#d9642b" />
    <path d="M5 2a6 6 0 0 1 8 7q-3 3-6 1T5 2z" fill="#3a6fb2" />
    <path d="M2 4l4 2 2 3-2 2" fill="#efa53a" />
  </svg>,
  <svg key="red" width="14" height="15" viewBox="0 0 14 15">
    <path d="M0 0h14v15H0z" fill="#e6d9de" />
    <path d="M1 1h5l3 5 4-4v6l-3 3 3 4H8l-2-4-3 4H1l2-7z" fill="#b42742" />
    <path d="M8 0h5v4H9z" fill="#2c2c58" />
  </svg>,
  <svg key="rec" width="16" height="15" viewBox="0 0 16 15">
    <path d="M0 0h16v15H0z" fill="#f3ece7" />
    <path d="M3 6h4v4H3zM9 4h4v2h-1v5h-2V6H9z" fill="#c9614d" />
  </svg>,
  <FruityIcon key="fl" />,
  <ChromeIcon key="chrome-open" />,
  <FruityIcon key="fl-open" />,
];

const appState = {
  2: "bg-white/20 border-white/30",
  12: "bg-white/20 border-white/30",
  14: "bg-white/20 border-white/30",
  15: "bg-white/45 border-white/60",
};

function Taskbar() {
  return (
    <div className="flex h-[28px] shrink-0 items-center justify-between border-t-2 border-[#4a8560] bg-linear-to-r from-[#3d7047] via-[#467f56] to-[#5c906c]">
      <div className="-ml-[3px] flex h-full gap-[2px]">
        {apps.map((app, i) => (
          <div
            key={i}
            className={`flex w-[41.100px] items-center justify-center border ${appState[i] || "border-transparent"}`}
          >
            {app}
          </div>
        ))}
      </div>
      <div className="flex items-center pr-[17px] text-white">
        <div className="mr-[16px] h-0 w-0 border-x-[3px] border-b-[3px] border-x-transparent border-b-white" />
        <svg width="12" height="12" viewBox="0 0 12 12" className="mr-[10px]">
          <path d="M1 1v11" stroke="#fff" strokeWidth="1.500" />
          <path d="M2 1h4l1 1.500h5l-2 2.500 1 2H6L5 6H2z" fill="#fff" />
        </svg>
        <svg width="14" height="14" viewBox="0 0 14 14" className="mr-[9px]">
          <path d="M0 4h6v3L4 9v4H3V9L0 7z" fill="#fff" />
          <path d="M8 2h5v11H8z" fill="#3d5547" stroke="#fff" strokeWidth="1.300" />
          <path d="M9 8h3v4H9z" fill="#fff" />
        </svg>
        <svg width="14" height="12" viewBox="0 0 14 12" className="mr-[9px]">
          <path d="M1 1v3h4V1M3 4v7M6 8h7V1M7 11h4" fill="none" stroke="#eef4f0" strokeWidth="1.400" />
        </svg>
        <svg width="13" height="13" viewBox="0 0 13 13" className="mr-[13px]">
          <path d="M0 4h3l4-4v13L3 9H0z" fill="#fff" />
          <path d="M8.500 3.500q2 3 0 6M10.500 2q3 4.500 0 9" fill="none" stroke="#e4efe8" strokeWidth="1.200" />
        </svg>
        <span className="w-[41px] text-[11px]">ENG</span>
        <span className="w-[41px] text-[11.500px] whitespace-nowrap">
          <span className="inline-block origin-left scale-x-[0.92]">9:59 PM</span>
        </span>
      </div>
    </div>
  );
}

export default function App() {
  return (
    <div className="flex h-[720px] w-[1280px] flex-col overflow-hidden bg-[#353c47] font-['Noto_Sans','Open_Sans',sans-serif]">
      <TopBar />
      <div className="flex min-h-0 flex-1">
        <Browser />
        <Playlist />
      </div>
      <Taskbar />
    </div>
  );
}
